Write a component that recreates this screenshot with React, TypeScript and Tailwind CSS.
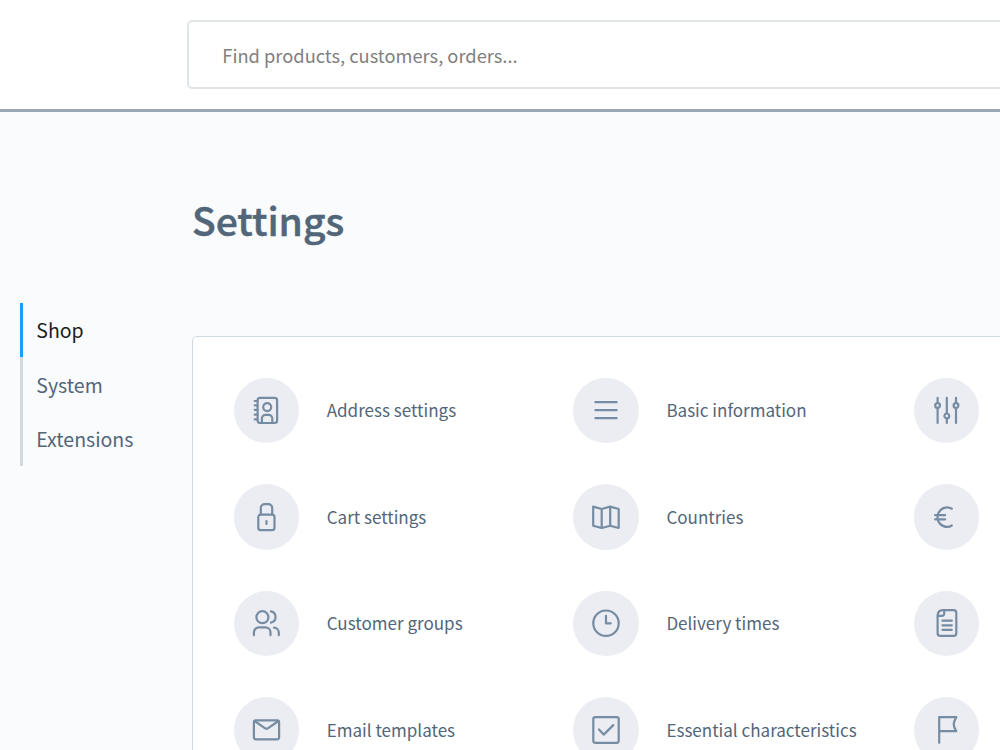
import type { ReactNode } from "react";

function Glyph({ children }: { children: ReactNode }) {
  return (
    <svg
      viewBox="-16 -16 32 32"
      className="h-8 w-8 fill-none stroke-[#758ca3] stroke-[2.2]"
      strokeLinecap="round"
      strokeLinejoin="round"
      aria-hidden="true"
    >
      {children}
    </svg>
  );
}

const AddressBook = () => (
  <Glyph>
    <g transform="translate(0.5 0.2)">
      <rect x="-8.9" y="-12.4" width="19.5" height="25.2" rx="2.4" />
      <circle cx="0.7" cy="-3.1" r="4" />
      <path d="M-4.6 12.3V8.3a3.6 3.6 0 0 1 3.6-3.6h3.2a3.6 3.6 0 0 1 3.6 3.6v4M-11.8-9.2h2.6M-11.8-4.9h2.6M-11.8-.4h2.6M-11.8 4.5h2.6M-11.8 9.2h2.6" />
    </g>
  </Glyph>
);

const Lock = () => (
  <Glyph>
    <g transform="translate(0.5 0)">
      <rect x="-8.2" y="-2.4" width="16.2" height="15.6" rx="2.4" />
      <path d="M-5.7-2.6v-6.4a3.8 3.8 0 0 1 3.8-3.8h3.8a3.8 3.8 0 0 1 3.8 3.8v6.4M0 4.2v2.7" />
    </g>
  </Glyph>
);

const Users = () => (
  <Glyph>
    <g transform="translate(0.5 0.2)">
      <circle cx="-4.1" cy="-6" r="6" />
      <path d="M-12.6 12V9.2a5 5 0 0 1 5-5h6.6a5 5 0 0 1 5 5V12M4.4-11.8a5.7 5.7 0 0 1 0 11.2M7.5 4.5a5 5 0 0 1 4.8 5V12" />
    </g>
  </Glyph>
);

const Envelope = () => (
  <Glyph>
    <g transform="translate(0.5 0)">
      <rect x="-12.6" y="-9.7" width="25.2" height="19" rx="2" />
      <path d="M-12-9 -1.3-1.7a2.3 2.3 0 0 0 2.6 0L12-9" />
    </g>
  </Glyph>
);

const Bars = () => (
  <Glyph>
    <path d="M-10.6-7.8h21.2M-10.6 .1h21.2M-10.6 8.1h21.2" />
  </Glyph>
);

const FoldedMap = () => (
  <Glyph>
    <path d="M-12.8-10.4-4.3-8 4.2-10.4 12.7-8V11L4.2 8.7-4.3 11-12.8 8.7ZM-4.3-8V11M4.2-10.4V8.7" />
  </Glyph>
);

const ClockFace = () => (
  <Glyph>
    <circle cx="0" cy="0.2" r="12.7" />
    <path d="M0-7.2V.3h4.7" />
  </Glyph>
);

const CheckBox = () => (
  <Glyph>
    <rect x="-12.7" y="-12.9" width="25.4" height="25.7" rx="2" />
    <path d="M-7-.5-2.3 4.6 7.3-4.9" />
  </Glyph>
);

const Sliders = () => (
  <Glyph>
    <g transform="translate(-0.2 0.2)">
      <path d="M-9.2-12.4v5M-9.2-2v14.7M0-12.4V3M0 8.4v4.3M9.2-12.4v5M9.2-2v14.7" />
      <circle cx="-9.2" cy="-4.7" r="2.4" />
      <circle cx="0" cy="5.7" r="2.4" />
      <circle cx="9.2" cy="-4.7" r="2.4" />
    </g>
  </Glyph>
);

const EuroSign = () => (
  <Glyph>
    <path d="M4.8-8.3C3.3-9.2 2-9.7 .3-9.7C-5.2-9.7-9.5-5.3-9.5 .2S-5.2 9.9 .3 9.9C2 9.9 3.3 9.5 4.8 8.5M-11.9-1.9h10M-11.9 2.3h10" />
  </Glyph>
);

const DocumentLines = () => (
  <Glyph>
    <path d="M-9.4-7.6Q-9-12.9-4.3-12.9H6.6a2.7 2.7 0 0 1 2.7 2.7V10.2a2.7 2.7 0 0 1-2.7 2.7H-6.7a2.7 2.7 0 0 1-2.7-2.7ZM-2.8-12.5v3.2a2.2 2.2 0 0 1-2.2 2.2h-4M-4.6-2.3h9.4M-4.6 2.3h9.4M-4.6 6.8h9.4" />
  </Glyph>
);

const Flag = () => (
  <Glyph>
    <path d="M-7.8 12.8v-25.6H9.3C8-10.6 6.7-8.2 6.7-5.9S8-.6 9.3 1.2H-7.8" />
  </Glyph>
);

const entries: { label: string; icon: () => ReactNode }[] = [
  { label: "Address settings", icon: AddressBook },
  { label: "Basic information", icon: Bars },
  { label: "", icon: Sliders },
  { label: "Cart settings", icon: Lock },
  { label: "Countries", icon: FoldedMap },
  { label: "", icon: EuroSign },
  { label: "Customer groups", icon: Users },
  { label: "Delivery times", icon: ClockFace },
  { label: "", icon: DocumentLines },
  { label: "Email templates", icon: Envelope },
  { label: "Essential characteristics", icon: CheckBox },
  { label: "", icon: Flag },
];

const tabs = ["Shop", "System", "Extensions"];

export default function App() {
  return (
    <div className="flex h-[750px] w-[1000px] flex-col overflow-hidden bg-[#f9fbfd] font-['Noto_Sans_CJK_SC',sans-serif] text-[#52667a]">
      <header className="flex h-[112px] shrink-0 border-b-[3px] border-[#9aa8b5] bg-white pt-[20px] pl-[187px]">
        <div className="flex h-[69px] w-[860px] shrink-0 items-center rounded-[5px] border-2 border-[#e0e5e8] pl-[33.3px]">
          <span className="translate-y-px text-[18.3px] whitespace-nowrap text-[#7f7f7f]">Find products, customers, orders...</span>
        </div>
      </header>
      <div className="flex min-h-0 flex-1">
        <nav className="w-[192px] shrink-0 pt-[190.5px] pl-5">
          {tabs.map((tab, i) => (
            <div
              key={tab}
              className={
                i === 0
                  ? "flex h-[54.5px] items-center border-l-[3px] border-[#189eff] pl-[13.3px] text-[19.5px] text-[#1a1d20]"
                  : "flex h-[54.5px] items-center border-l-[3px] border-[#d1d9e0] pl-[13.3px] text-[19.5px]"
              }
            >
              {tab}
            </div>
          ))}
        </nav>
        <main className="flex w-[900px] shrink-0 flex-col">
          <h1 className="mt-[77px] h-[60px] text-[39px] leading-[60px] font-medium [-webkit-text-stroke:0.5px_#52667a]">
            Settings
          </h1>
          <section className="mt-[86.5px] grid h-[500px] w-[1100px] shrink-0 auto-rows-[106.5px] grid-cols-[339.7px_340.5px_340px] rounded-[5px] border border-[#d1d9e0] bg-white pt-[20.7px] pl-[40.7px]">
            {entries.map(({ label, icon: Icon }, i) => (
              <div key={i} className="flex items-center gap-[27.5px]">
                <span className="flex size-[65.5px] shrink-0 items-center justify-center rounded-full bg-[#ebedf2]">
                  <Icon />
                </span>
                <span className="text-[17.05px] leading-[26px] whitespace-nowrap">{label}</span>
              </div>
            ))}
          </section>
        </main>
      </div>
    </div>
  );
}
